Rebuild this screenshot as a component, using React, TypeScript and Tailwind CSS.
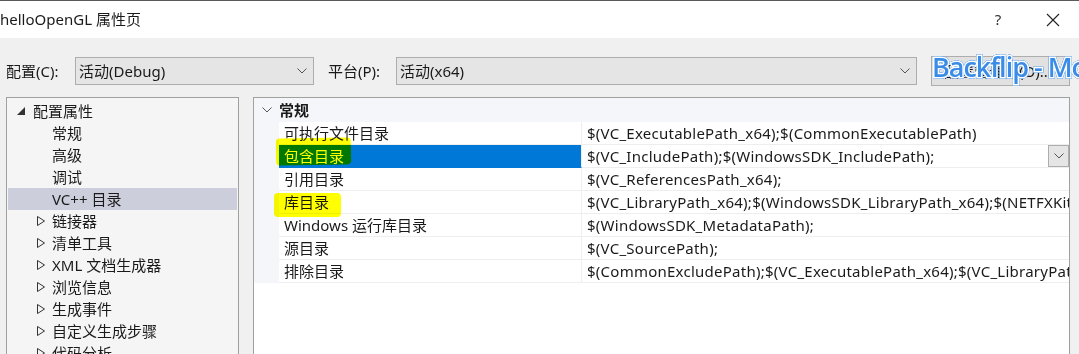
import React from "react";

const font = "font-['Noto_Sans','Noto_Sans_CJK_SC',sans-serif]";

const treeItems = [
  { label: "常规", kind: "leaf" },
  { label: "高级", kind: "leaf" },
  { label: "调试", kind: "leaf" },
  { label: "VC++ 目录", kind: "leaf", selected: true },
  { label: "链接器", kind: "node" },
  { label: "清单工具", kind: "node" },
  { label: "XML 文档生成器", kind: "node" },
  { label: "浏览信息", kind: "node" },
  { label: "生成事件", kind: "node" },
  { label: "自定义生成步骤", kind: "node" },
  { label: "代码分析", kind: "node" },
];

const rows = [
  { name: "可执行文件目录", value: "$(VC_ExecutablePath_x64);$(CommonExecutablePath)" },
  { name: "包含目录", value: "$(VC_IncludePath);$(WindowsSDK_IncludePath);", selected: true },
  { name: "引用目录", value: "$(VC_ReferencesPath_x64);" },
  { name: "库目录", value: "$(VC_LibraryPath_x64);$(WindowsSDK_LibraryPath_x64);$(NETFXKitsDir)Lib\\um\\x64" },
  { name: "Windows 运行库目录", value: "$(WindowsSDK_MetadataPath);" },
  { name: "源目录", value: "$(VC_SourcePath);" },
  { name: "排除目录", value: "$(CommonExcludePath);$(VC_ExecutablePath_x64);$(VC_LibraryPath_x64)" },
];

function Chevron({ className = "" }: { className?: string }) {
  return (
    <svg width="10" height="6" viewBox="0 0 10 6" className={className}>
      <polyline points="0.5,0.5 5,5 9.5,0.5" fill="none" stroke="#555" strokeWidth="1" />
    </svg>
  );
}

function Combo({ text, width }: { text: string; width: string }) {
  return (
    <div className={`${width} h-[28px] flex items-center justify-between border border-[#adadad] bg-[#e5e5e5] pl-[3px] pr-[6px]`}>
      <span className="text-[15px] text-[#1a1a1a]">{text}</span>
      <Chevron />
    </div>
  );
}

export default function App() {
  return (
    <div className={`${font} w-[1079px] h-[354px] overflow-hidden bg-[#f0f0f0] flex flex-col border-t border-[#5a5a5a] text-[#1a1a1a]`}>
      {/* Title bar */}
      <div className="h-[37px] shrink-0 bg-white flex items-center justify-between">
        <span className="text-[15px] text-[#1a1a1a] leading-none">helloOpenGL 属性页</span>
        <div className="flex items-center">
          <span className="w-[46px] mr-[9px] text-center text-[15px] text-[#333]">?</span>
          <span className="w-[45px] flex justify-center mr-[4px]">
            <svg width="14" height="14" viewBox="0 0 14 14">
              <path d="M1 1 L13 13 M13 1 L1 13" stroke="#222" strokeWidth="1.1" />
            </svg>
          </span>
        </div>
      </div>

      {/* Toolbar */}
      <div className="mt-[18px] h-[30px] flex items-center pl-[6px]">
        <span className="text-[15px] w-[69px]">配置(C):</span>
        <Combo text="活动(Debug)" width="w-[239px]" />
        <span className="text-[15px] ml-[14px] w-[68px]">平台(P):</span>
        <Combo text="活动(x64)" width="w-[521px]" />
        <div className="relative ml-[14px] w-[139px] h-[30px] border border-[#adadad] bg-[#e1e1e1] flex items-center pl-[12px]">
          <span className="text-[15px]">配置管理器(O)...</span>
          {/* watermark overlay */}
          <span className="absolute left-[0px] top-[-4px] text-[27px] font-semibold tracking-[-1px] leading-none whitespace-nowrap text-[#3a8ce6] font-['Open_Sans',sans-serif] [paint-order:stroke_fill] [-webkit-text-stroke:3px_white] [filter:drop-shadow(0_0_0.7px_#2a7fe0)_drop-shadow(0_0_0.7px_#2a7fe0)]">
            Backflip - Mo
          </span>
        </div>
      </div>

      {/* Panels */}
      <div className="mt-[11px] flex gap-[14px] pl-[6px] flex-1">
        {/* Tree */}
        <div className="w-[233px] border border-[#a0a0a0] bg-[#f5f5f5] pt-[2px] px-[1px]">
          <div className="h-[22px] flex items-center">
            <svg width="8" height="8" viewBox="0 0 8 8" className="ml-[9px] mr-[8px]">
              <polygon points="8,0 8,8 0,8" fill="#333" />
            </svg>
            <span className="text-[15px]">配置属性</span>
          </div>
          {treeItems.map((t) => (
            <div
              key={t.label}
              className={`h-[22px] flex items-center ${t.selected ? "bg-[#cccedb]" : ""}`}
            >
              {t.kind === "node" ? (
                <svg width="8" height="10" viewBox="0 0 8 10" className="ml-[29px] mr-[7px]">
                  <polygon points="0.5,0.5 7.5,5 0.5,9.5" fill="none" stroke="#333" strokeWidth="1" />
                </svg>
              ) : (
                <span className="w-[44px]" />
              )}
              <span className="text-[15px]">{t.label}</span>
            </div>
          ))}
        </div>

        {/* Property grid */}
        <div className="w-[817px] border border-[#a0a0a0] bg-white relative">
          <div className="h-[24px] bg-[#f4f6fa] flex items-center">
            <span className="w-[25px] flex justify-center">
              <Chevron />
            </span>
            <span className="text-[15px] font-bold">常规</span>
          </div>
          {rows.map((r) => (
            <div key={r.name} className="h-[23px] flex">
              <div className="w-[25px] bg-[#f4f6fa]" />
              <div
                className={`w-[303px] flex items-center pl-[5px] border-b border-r border-[#eeeeee] ${
                  r.selected ? "bg-[#0078d7] text-white border-b-[#0078d7]" : ""
                }`}
              >
                <span className="text-[15px] whitespace-nowrap">{r.name}</span>
              </div>
              <div className="flex-1 min-w-0 flex items-center pl-[5px] border-b border-[#eeeeee] overflow-hidden relative">
                <span className="text-[15px] tracking-[0.25px] whitespace-nowrap">{r.value}</span>
                {r.selected && (
                  <div className="absolute right-0 top-0 w-[21px] h-[22px] border border-[#adadad] bg-[#e5e5e5] flex items-center justify-center">
                    <Chevron />
                  </div>
                )}
              </div>
            </div>
          ))}

          {/* Highlighter marks */}
          <div className="absolute left-[22px] top-[40px] w-[75px] h-[27px] bg-[#ffff00] mix-blend-multiply rounded-[4px] -rotate-1" />
          <div className="absolute left-[20px] top-[95px] w-[67px] h-[24px] bg-[#ffff00] mix-blend-multiply rounded-[4px]" />
        </div>
      </div>
    </div>
  );
}
